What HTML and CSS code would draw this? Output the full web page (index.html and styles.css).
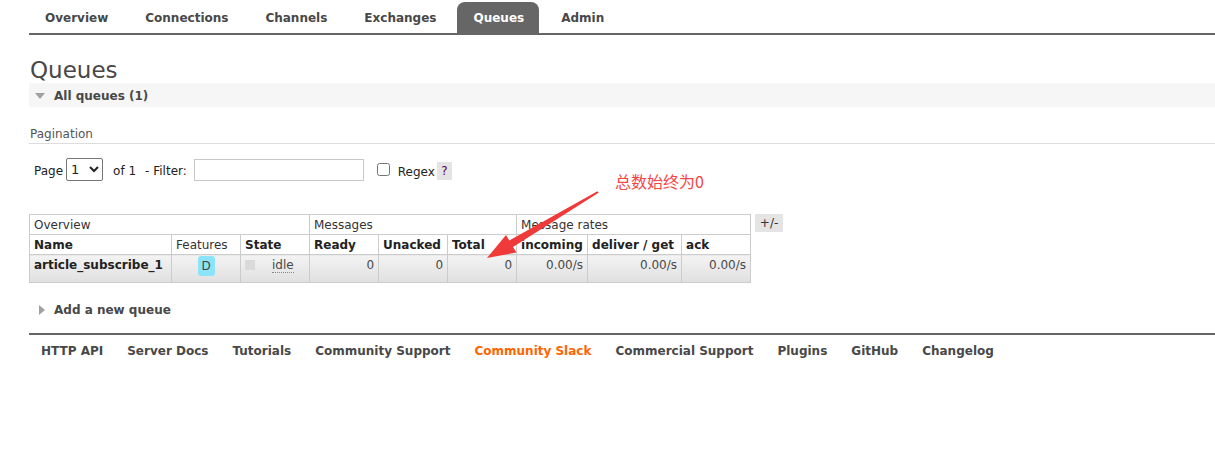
FILE: index.html
```html
<!DOCTYPE html>
<html>
<head>
<meta charset="utf-8">
<title>RabbitMQ Management - Queues</title>
<link rel="stylesheet" href="styles.css">
</head>
<body>
<div class="page">
  <nav class="tabs">
    <a class="tab">Overview</a>
    <a class="tab">Connections</a>
    <a class="tab">Channels</a>
    <a class="tab">Exchanges</a>
    <a class="tab active">Queues</a>
    <a class="tab">Admin</a>
  </nav>

  <h1 class="title">Queues</h1>
  <div class="section-head open"><span class="tri-down"></span><span>All queues (1)</span></div>

  <h3 class="pag-label">Pagination</h3>
  <div class="pag-row">
    <span class="lbl">Page</span>
    <select class="page-select"><option>1</option></select>
    <span class="of">of 1</span>
    <span class="filter-lbl">- Filter:</span>
    <input class="filter" type="text">
    <input class="regex-box" type="checkbox">
    <span class="regex-lbl">Regex</span>
    <span class="help">?</span>
  </div>

  <div class="table-wrap">
    <table class="queues">
      <colgroup>
        <col class="c-name"><col class="c-std"><col class="c-std"><col class="c-std"><col class="c-std"><col class="c-std"><col class="c-inc"><col class="c-del"><col class="c-std">
      </colgroup>
      <thead>
        <tr class="group">
          <th colspan="3">Overview</th>
          <th colspan="3">Messages</th>
          <th colspan="3">Message rates</th>
        </tr>
        <tr class="cols">
          <th>Name</th>
          <th class="normal">Features</th>
          <th>State</th>
          <th>Ready</th>
          <th>Unacked</th>
          <th>Total</th>
          <th>incoming</th>
          <th>deliver / get</th>
          <th>ack</th>
        </tr>
      </thead>
      <tbody>
        <tr class="data">
          <td class="qname">article_subscribe_1</td>
          <td class="feat"><span class="badge">D</span></td>
          <td class="state"><span class="state-box"></span><span class="idle">idle</span></td>
          <td class="num">0</td>
          <td class="num">0</td>
          <td class="num">0</td>
          <td class="num">0.00/s</td>
          <td class="num">0.00/s</td>
          <td class="num">0.00/s</td>
        </tr>
      </tbody>
    </table>
    <span class="plusminus">+/-</span>
  </div>

  <div class="section-head closed"><span class="tri-right"></span><span>Add a new queue</span></div>

  <footer class="footer">
    <a>HTTP API</a>
    <a>Server Docs</a>
    <a>Tutorials</a>
    <a>Community Support</a>
    <a class="slack">Community Slack</a>
    <a>Commercial Support</a>
    <a>Plugins</a>
    <a>GitHub</a>
    <a>Changelog</a>
  </footer>
</div>

<div class="note">总数始终为0</div>
<svg class="arrow" width="1215" height="455" viewBox="0 0 1215 455">
  <polygon points="487,258 506,235 509.3,240.6 597.4,191.2 598.6,192.8 513,247 516.5,252.5" fill="#f03a3a"/>
</svg>
</body>
</html>
```
FILE: styles.css
```css
html, body {
  margin: 0;
  padding: 0;
  background: #fff;
}
body {
  font-family: "DejaVu Sans", Verdana, sans-serif;
  font-size: 12px;
  color: #484848;
}
.page {
  padding-left: 29px;
}
.tabs {
  display: flex;
  gap: 6px;
  padding-top: 2px;
  border-bottom: 2px solid #666;
}
.tab {
  display: block;
  padding: 2px 15px 0 16px;
  height: 29px;
  line-height: 29px;
  font-weight: bold;
  color: #484848;
}
.tab.active {
  background: #666;
  color: #fff;
  border-radius: 8px 8px 0 0;
}
.title {
  font-size: 23px;
  font-weight: normal;
  line-height: 24px;
  margin: 23px 0 1px 1px;
  color: #484848;
}
.section-head {
  display: flex;
  align-items: center;
  height: 23px;
  padding-top: 1px;
  font-weight: bold;
}
.section-head.open {
  background: #f6f6f6;
  padding-left: 6px;
}
.tri-down {
  width: 0;
  height: 0;
  border-left: 5px solid transparent;
  border-right: 5px solid transparent;
  border-top: 6px solid #a0a0a0;
  margin-right: 9px;
}
.section-head.closed {
  margin-top: 14px;
  padding-left: 10px;
}
.tri-right {
  width: 0;
  height: 0;
  border-top: 5px solid transparent;
  border-bottom: 5px solid transparent;
  border-left: 6px solid #a0a0a0;
  margin-right: 9px;
}
.pag-label {
  margin: 19px 0 0 0;
  padding: 0 0 1px 1px;
  font-size: 12px;
  font-weight: normal;
  line-height: 16px;
  color: #555;
  border-bottom: 1px solid #ddd;
}
.pag-row {
  display: flex;
  align-items: center;
  height: 23px;
  margin-top: 14px;
  padding-left: 5px;
  color: #222;
}
.lbl, .of, .filter-lbl {
  position: relative;
  top: 1px;
}
.page-select {
  width: 37px;
  height: 23px;
  margin-left: 3px;
  font-family: "DejaVu Sans", sans-serif;
  font-size: 13px;
  border: 1px solid #767676;
  border-radius: 2px;
  background: #fff;
  color: #222;
}
.of {
  margin-left: 10px;
}
.filter-lbl {
  margin-left: 9px;
}
.filter {
  width: 170px;
  height: 22px;
  box-sizing: border-box;
  margin: 0 0 0 7px;
  border: 1px solid #c8c8c8;
  padding: 0 3px;
}
.regex-box {
  width: 13px;
  height: 13px;
  margin: 0 0 0 13px;
}
.regex-lbl {
  margin-left: 8px;
  position: relative;
  top: 2px;
}
.help {
  margin-left: 2px;
  width: 15px;
  height: 18px;
  line-height: 19px;
  text-align: center;
  background: #e4e4e4;
  color: #505;
  position: relative;
  top: 1px;
}
.table-wrap {
  display: flex;
  align-items: flex-start;
  gap: 4px;
  margin-top: 33px;
}
.queues {
  border-collapse: collapse;
  table-layout: fixed;
  width: 722px;
  border: 1px solid #ccc;
}
.c-name { width: 142px; }
.c-std { width: 69px; }
.c-inc { width: 71px; }
.c-del { width: 94px; }
.queues th, .queues td {
  border: 1px solid #ccc;
  padding: 3px 4px 1px 4px;
  line-height: 15px;
  text-align: left;
  white-space: nowrap;
  overflow: hidden;
}
.queues tr.group th {
  font-weight: normal;
  color: #333;
}
.queues tr.cols th {
  font-weight: bold;
  color: #222;
}
.queues tr.cols th.normal {
  font-weight: normal;
  color: #333;
}
.queues td {
  vertical-align: top;
  background: linear-gradient(#f3f3f3, #e0e0e0);
  padding-bottom: 9px;
  color: #484848;
}
.queues td.qname {
  font-weight: bold;
  color: #222;
}
.queues td.num {
  text-align: right;
}
.queues td.feat {
  text-align: center;
  padding-top: 1px;
  padding-bottom: 6px;
}
.badge {
  display: inline-block;
  width: 17px;
  height: 20px;
  line-height: 21px;
  border-radius: 3px;
  background: #8ce4fb;
  color: #444;
  text-align: center;
}
.state-box {
  display: inline-block;
  width: 10px;
  height: 10px;
  background: #dadada;
  vertical-align: -1px;
}
.idle {
  margin-left: 17px;
  border-bottom: 1px dotted #888;
}
.plusminus {
  display: block;
  width: 28px;
  height: 18px;
  line-height: 19px;
  text-align: center;
  background: #e4e4e4;
  color: #333;
}
.footer {
  display: flex;
  margin-top: 12px;
  border-top: 2px solid #666;
  padding-top: 8px;
}
.footer a {
  display: block;
  padding: 0 12px;
  line-height: 16px;
  font-weight: bold;
  color: #484848;
}
.footer a.slack {
  color: #ff6600;
}
.note {
  position: absolute;
  left: 615px;
  top: 171px;
  font-family: "Noto Sans CJK SC", sans-serif;
  font-size: 16px;
  line-height: 20px;
  color: #f24646;
}
.arrow {
  position: absolute;
  left: 0;
  top: 0;
  pointer-events: none;
}
```
